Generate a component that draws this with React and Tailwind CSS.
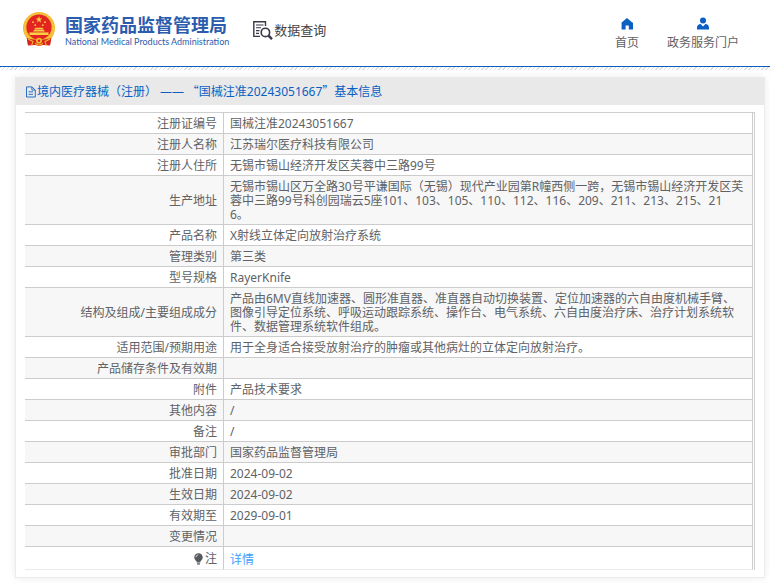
import React from "react";

const rows = [
  ["注册证编号", "国械注准20243051667"],
  ["注册人名称", "江苏瑞尔医疗科技有限公司"],
  ["注册人住所", "无锡市锡山经济开发区芙蓉中三路99号"],
  [
    "生产地址",
    "无锡市锡山区万全路30号平谦国际（无锡）现代产业园第R幢西侧一跨，无锡市锡山经济开发区芙蓉中三路99号科创园瑞云5座101、103、105、110、112、116、209、211、213、215、21\n6。",
  ],
  ["产品名称", "X射线立体定向放射治疗系统"],
  ["管理类别", "第三类"],
  ["型号规格", "RayerKnife"],
  [
    "结构及组成/主要组成成分",
    "产品由6MV直线加速器、圆形准直器、准直器自动切换装置、定位加速器的六自由度机械手臂、图像引导定位系统、呼吸运动跟踪系统、操作台、电气系统、六自由度治疗床、治疗计划系统软件、数据管理系统软件组成。",
  ],
  ["适用范围/预期用途", "用于全身适合接受放射治疗的肿瘤或其他病灶的立体定向放射治疗。"],
  ["产品储存条件及有效期", ""],
  ["附件", "产品技术要求"],
  ["其他内容", "/"],
  ["备注", "/"],
  ["审批部门", "国家药品监督管理局"],
  ["批准日期", "2024-09-02"],
  ["生效日期", "2024-09-02"],
  ["有效期至", "2029-09-01"],
  ["变更情况", ""],
];

const STAR = "M0 -3.6 L0.85 -1.15 L3.4 -1.1 L1.35 0.45 L2.1 2.9 L0 1.45 L-2.1 2.9 L-1.35 0.45 L-3.4 -1.1 L-0.85 -1.15 Z";

function Emblem() {
  return (
    <svg width="34" height="36" viewBox="0 0 34 36" aria-hidden="true">
      <path d="M4 23 L6 34.5 L13 34 L17 35 L21 34 L28 34.5 L30 23 Z" fill="#d9231d" />
      <circle cx="17" cy="17" r="16" fill="#f3b92f" />
      <circle cx="17" cy="17" r="14.3" fill="none" stroke="#fad660" strokeWidth="1" strokeDasharray="2 1.4" />
      <circle cx="17" cy="16.2" r="12.6" fill="#e32420" />
      <g fill="#f8cf45">
        <path d={STAR} transform="translate(17 8.6)" />
        <circle cx="11" cy="11.2" r="0.9" />
        <circle cx="23" cy="11.2" r="0.9" />
        <circle cx="13.2" cy="14.2" r="0.9" />
        <circle cx="20.8" cy="14.2" r="0.9" />
        <path d="M12 18.5 L13.5 16.8 H20.5 L22 18.5 Z" />
        <path d="M11 20.6 L12.2 19.1 H21.8 L23 20.6 Z" />
        <path d="M7.5 21.4 H26.5 V24 H7.5 Z" />
      </g>
      <path d="M5 27 C10 29 13 28.6 17 28.6 C21 28.6 24 29 29 27 L28 34 H6 Z" fill="#d9231d" />
      <circle cx="17" cy="29.8" r="3" fill="#f3b92f" />
      <circle cx="17" cy="29.8" r="1.2" fill="#d9231d" />
      <path d="M6 28 L11 30.6 L9.6 34.4 M28 28 L23 30.6 L24.4 34.4 M13 32.5 L17 34.2 L21 32.5" fill="none" stroke="#f3b92f" strokeWidth="1.1" />
    </svg>
  );
}

function QueryIcon() {
  return (
    <svg width="20" height="20" viewBox="0 0 20 20" fill="none" stroke="#39394a" aria-hidden="true">
      <path d="M12.5 6 V1.8 H0.8 V16.4 H7" strokeWidth="1.4" />
      <path d="M3 5 H10.5 M3 7.8 H8 M3 10.6 H6.5 M3 13.4 H6" strokeWidth="1.1" />
      <circle cx="12.4" cy="12.4" r="4.2" strokeWidth="1.6" />
      <path d="M15.5 15.6 L19 19.2" strokeWidth="2.4" />
    </svg>
  );
}

function HomeIcon() {
  return (
    <svg width="12" height="12" viewBox="0 0 12 12" fill="#0a5fc2" aria-hidden="true">
      <path d="M6 0 L11.2 4.4 H12 V11.5 H7.8 V7.4 H4.6 V11.5 H0.6 V4.4 Z" />
    </svg>
  );
}

function UserIcon() {
  return (
    <svg width="12" height="13" viewBox="0 0 12 13" fill="#0a5fc2" aria-hidden="true">
      <circle cx="6" cy="3.4" r="3" />
      <path d="M0 12.5 V10.6 C0 8.4 1.6 7.4 3.6 7.1 L6 9.4 L8.4 7.1 C10.4 7.4 12 8.4 12 10.6 V12.5 Z" />
    </svg>
  );
}

function FileIcon() {
  return (
    <svg width="12" height="12" viewBox="0 0 12 12" fill="none" stroke="#2a6ec6" aria-hidden="true">
      <path d="M1.5 0.9 H6.9 L10.3 4 V11 H1.5 Z M6.9 0.9 V4 H10.3 M3.5 5.8 H8 M3.5 8.3 H8" strokeWidth="1" />
    </svg>
  );
}

function BulbIcon() {
  return (
    <svg width="9" height="12" viewBox="0 0 9 12" aria-hidden="true">
      <circle cx="4.5" cy="4.4" r="4.2" fill="#55595e" />
      <path d="M2.6 8 H6.4 V9.6 H2.6 Z M3 10.2 H6 V11.4 H3 Z" fill="#55595e" />
      <path d="M1.9 4.3 A2.6 2.6 0 0 1 4.3 1.9" fill="none" stroke="#ffffff" strokeWidth="0.7" />
    </svg>
  );
}

export default function App() {
  return (
    <div className="bg-white pb-2 font-['Noto_Sans','Noto_Sans_CJK_SC',sans-serif] text-xs text-[#606266]">
      <header className="flex h-[67px] items-start justify-between border-b border-[#0a5fc2] pr-[31px] pl-[22px]">
        <div className="flex items-start">
          <div className="flex items-start gap-[9px] pt-[11px]">
            <Emblem />
            <div className="pt-[3px]">
              <h1 className="text-[18px] leading-[22px] font-bold text-[#2c5cae]">国家药品监督管理局</h1>
              <p className="font-[Lato,sans-serif] text-[9px] leading-[12px] font-normal text-[#2c5cae]">
                National Medical Products Administration
              </p>
            </div>
          </div>
          <div className="flex items-center gap-px pt-5 pl-6 text-[#444444]">
            <QueryIcon />
            <span className="text-[13px] leading-5">数据查询</span>
          </div>
        </div>
        <nav className="flex gap-7 pt-[17px]">
          <a href="#home" className="flex flex-col items-center gap-[5px]">
            <span className="flex h-[13px] items-center"><HomeIcon /></span>
            <span className="leading-4">首页</span>
          </a>
          <a href="#portal" className="flex flex-col items-center gap-[5px]">
            <UserIcon />
            <span className="leading-4">政务服务门户</span>
          </a>
        </nav>
      </header>
      <div className="h-[3px] bg-[repeating-linear-gradient(135deg,#dedede_0_1px,#ffffff_1px_3px)]" />
      <main className="mt-[7px] mr-[5px] ml-[15px] border border-[#ebebeb] pb-[7px] shadow-[0_0_8px_rgba(0,0,0,0.08)]">
        <h2 className="flex h-[27px] items-center bg-[#e9e9e9] pl-[9px] text-[#0a5fc2]">
          <FileIcon />
          <span>
            境内医疗器械（注册） ——<span className="font-['Noto_Sans_CJK_SC',sans-serif]"> “</span>
            国械注准20243051667
            <span className="font-['Noto_Sans_CJK_SC',sans-serif]">”</span>基本信息
          </span>
        </h2>
        <div className="mx-[9px] mt-[7px] border-t border-r border-t-[#cfcfcf] border-r-[#d0d0d4] pr-px">
          <table className="w-full border-separate border-spacing-0 leading-[14px]">
            <tbody>
              {rows.map(([label, value]) => (
                <tr key={label} className="even:bg-[#f7f7f7]">
                  <th scope="row" className="w-[199px] border-r border-b border-[#cccccc] px-[6px] pt-1 pb-[2px] text-right font-normal">
                    {label}
                  </th>
                  <td className="h-[21px] border-r border-b border-[#cccccc] px-[6px] pt-1 pb-[2px] whitespace-pre-line">{value}</td>
                </tr>
              ))}
              <tr>
                <th scope="row" className="w-[199px] border-r border-b border-r-[#cccccc] border-b-[#ebebeb] px-[6px] pt-1 pb-[2px] font-normal">
                  <span className="flex items-center justify-end gap-[2px]">
                    <BulbIcon />
                    注
                  </span>
                </th>
                <td className="h-[23px] border-r border-b border-r-[#cccccc] border-b-[#ebebeb] px-[6px] pt-[6px] pb-[2px]">
                  <a href="#detail" className="text-[#409eff]">详情</a>
                </td>
              </tr>
            </tbody>
          </table>
        </div>
      </main>
    </div>
  );
}
